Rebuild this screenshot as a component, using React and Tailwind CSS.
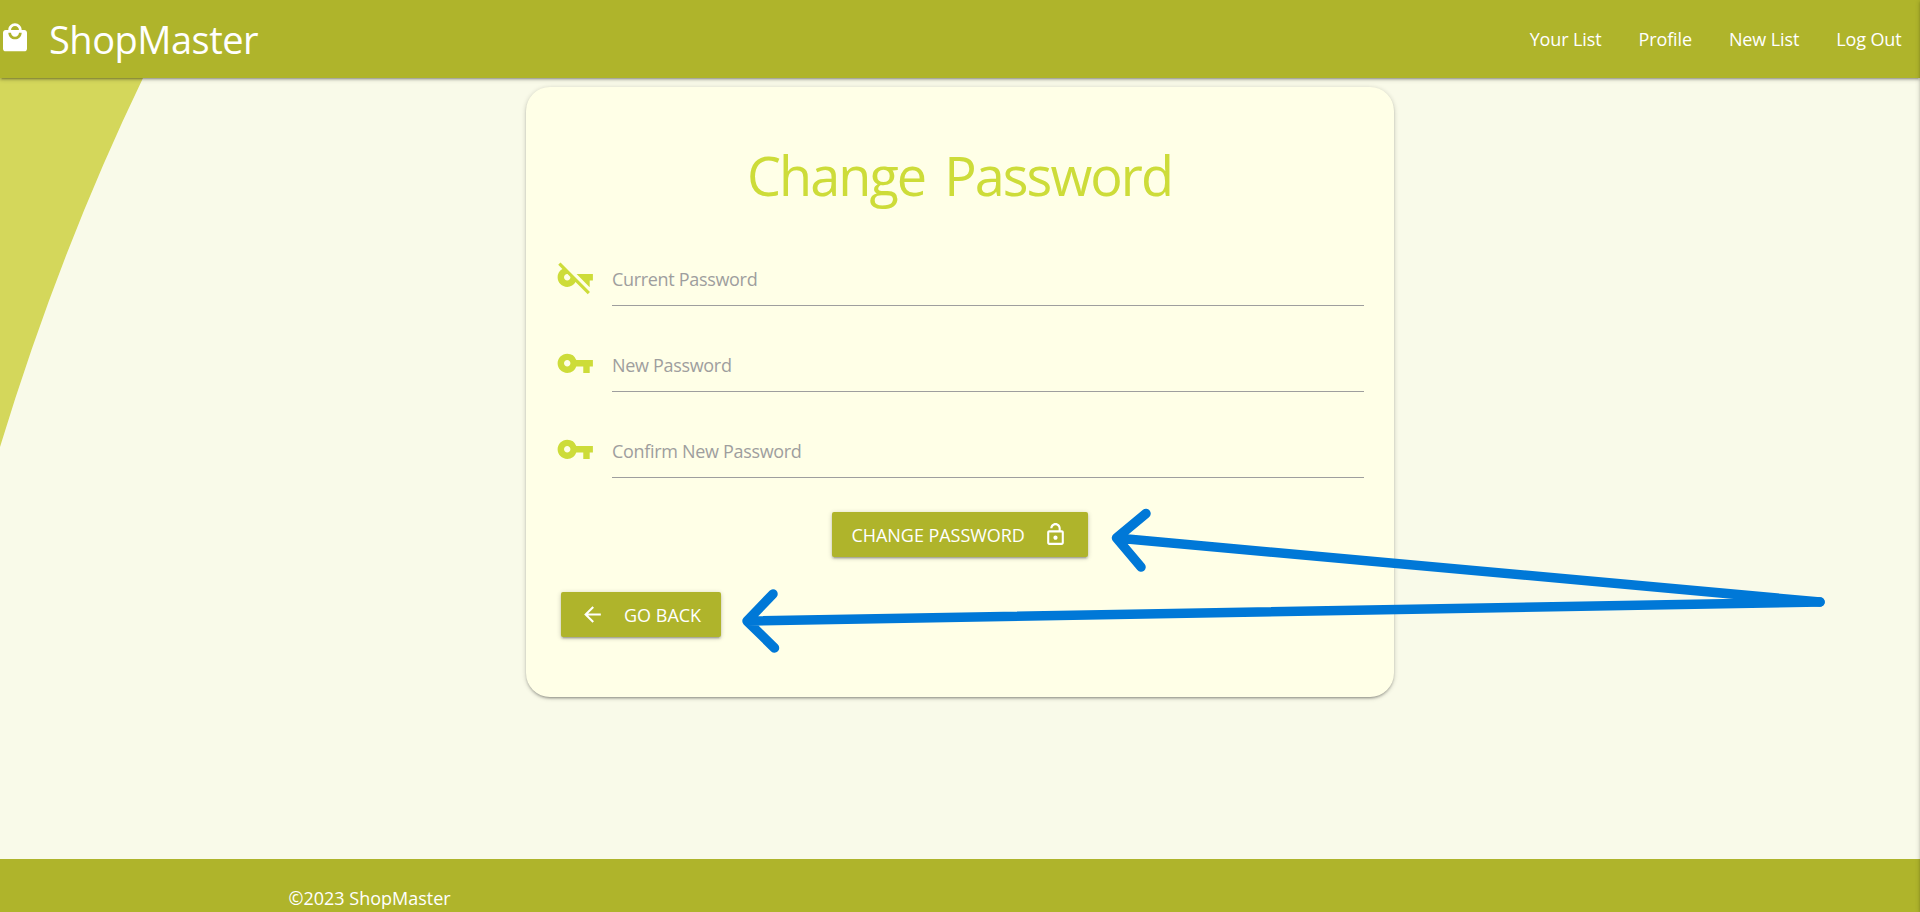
import { MdArrowBack, MdLocalMall, MdOutlineLockOpen, MdVpnKey, MdVpnKeyOff } from "react-icons/md";

const links = ["Your List", "Profile", "New List", "Log Out"];

const fields = [
  { label: "Current Password", Icon: MdVpnKeyOff },
  { label: "New Password", Icon: MdVpnKey },
  { label: "Confirm New Password", Icon: MdVpnKey },
];

const buttonClass =
  "flex h-[45px] items-center rounded-xs bg-[#afb42b] text-[18px] text-white uppercase shadow-[0_2px_2px_0_rgba(0,0,0,0.14),0_3px_1px_-2px_rgba(0,0,0,0.12),0_1px_5px_0_rgba(0,0,0,0.2)]";

function Header() {
  return (
    <header className="relative flex h-[78px] shrink-0 items-center justify-between bg-[#afb42b] pr-[18.5px] text-white shadow-[0_2px_2px_0_rgba(0,0,0,0.14),0_3px_1px_-2px_rgba(0,0,0,0.12),0_1px_5px_0_rgba(0,0,0,0.2)]">
      <a className="flex h-full items-center">
        <MdLocalMall className="-ml-px mb-[3px] size-8" />
        <span className="ml-[18px] text-[38px] leading-[78px] tracking-[-0.5px]">ShopMaster</span>
      </a>
      <nav className="flex gap-[37px] text-[18px] leading-[78px] tracking-[-0.12px]">
        {links.map((link) => (
          <a key={link}>{link}</a>
        ))}
      </nav>
    </header>
  );
}

function Field({ label, Icon }) {
  return (
    <div className="flex h-[54px]">
      <Icon className="mt-[6px] mr-[18px] ml-[0.5px] size-[38.5px] shrink-0 text-[#cddc39]" />
      <label className="flex-1 border-b border-[#9e9e9e] text-[18px] leading-[54px] tracking-[-0.32px] text-[#9e9e9e]">
        {label}
      </label>
    </div>
  );
}

function Arrows() {
  return (
    <svg className="pointer-events-none absolute top-0 left-0" width="1920" height="912" fill="none" stroke="#0078d7" strokeWidth="9.5" strokeLinecap="round" strokeLinejoin="round">
      <path d="M1820 602L1116.5 538M1146 513.5L1116.5 538L1141 567" />
      <path d="M1820 602L747 621M773 594L747 621L774.5 648" />
    </svg>
  );
}

export default function App() {
  return (
    <div className="relative flex h-[912px] w-full flex-col overflow-hidden bg-[#f9fae9] font-['Open_Sans','Noto_Sans',sans-serif]">
      <svg className="absolute top-0 left-0" width="200" height="460">
        <path d="M0 60H152L143 78Q60 250 0 447Z" fill="#d4d75b" />
      </svg>
      <Header />
      <main className="relative flex-1 pt-[9px]">
        <section className="mx-auto h-[610px] w-[868px] rounded-[24px] bg-[#ffffe7] pt-[58px] pr-[30px] pl-[29px] shadow-[0_2px_2px_0_rgba(0,0,0,0.14),0_3px_1px_-2px_rgba(0,0,0,0.12),0_1px_5px_0_rgba(0,0,0,0.2)]">
          <h1 className="text-center text-[54px] leading-[60px] tracking-[-1.95px] text-[#cddc39] [word-spacing:7px]">
            Change Password
          </h1>
          <form className="mt-[47px] flex flex-col gap-8">
            {fields.map((field) => (
              <Field key={field.label} {...field} />
            ))}
          </form>
          <div className="mt-[34px] flex justify-center">
            <button className={`${buttonClass} w-[256px] pl-5`}>
              <span className="pt-px tracking-[-0.05px]">Change Password</span>
              <MdOutlineLockOpen className="mb-px ml-[18px] size-[25px]" />
            </button>
          </div>
          <button className={`${buttonClass} mt-[35px] ml-[6px] w-[160px] pl-[19px]`}>
            <MdArrowBack className="mr-[19px] mb-px size-[25px]" />
            <span className="pt-px">Go Back</span>
          </button>
        </section>
      </main>
      <footer className="h-[53px] shrink-0 bg-[#afb42b] pt-6 pl-[288.5px] text-[18px] leading-[30px] text-white">
        ©2023 ShopMaster
      </footer>
      <div className="absolute top-0 left-full h-full w-10 shadow-[0_2px_2px_0_rgba(0,0,0,0.14),0_3px_1px_-2px_rgba(0,0,0,0.12),0_1px_5px_0_rgba(0,0,0,0.2)]" />
      <Arrows />
    </div>
  );
}
